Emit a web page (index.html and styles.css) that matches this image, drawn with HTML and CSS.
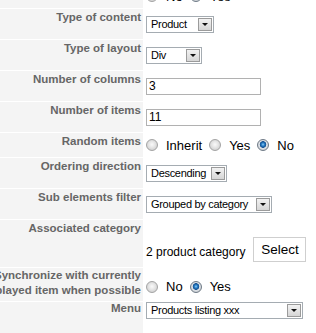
FILE: index.html
```html
<!DOCTYPE html>
<html>
<head>
  <meta charset="utf-8">
  <title>Module parameters</title>
  <link rel="stylesheet" href="styles.css">
</head>
<body>
  <div class="params">
    <div class="row row-short">
      <div class="key">Show title</div>
      <div class="value">
        <label class="choice"><input type="radio" name="showtitle">No</label>
        <label class="choice"><input type="radio" name="showtitle" checked>Yes</label>
      </div>
    </div>
    <div class="row">
      <div class="key">Type of content</div>
      <div class="value">
        <span class="select w-product"><select><option>Product</option><option>Category</option></select></span>
      </div>
    </div>
    <div class="row">
      <div class="key">Type of layout</div>
      <div class="value">
        <span class="select w-div"><select><option>Div</option><option>Table</option></select></span>
      </div>
    </div>
    <div class="row">
      <div class="key">Number of columns</div>
      <div class="value"><input class="text" type="text" value="3"></div>
    </div>
    <div class="row">
      <div class="key">Number of items</div>
      <div class="value"><input class="text" type="text" value="11"></div>
    </div>
    <div class="row row-short">
      <div class="key">Random items</div>
      <div class="value">
        <label class="choice"><input type="radio" name="random">Inherit</label>
        <label class="choice"><input type="radio" name="random">Yes</label>
        <label class="choice"><input type="radio" name="random" checked>No</label>
      </div>
    </div>
    <div class="row">
      <div class="key">Ordering direction</div>
      <div class="value">
        <span class="select w-desc"><select><option>Descending</option><option>Ascending</option></select></span>
      </div>
    </div>
    <div class="row">
      <div class="key">Sub elements filter</div>
      <div class="value">
        <span class="select w-group"><select><option>Grouped by category</option><option>None</option></select></span>
      </div>
    </div>
    <div class="row row-tall">
      <div class="key">Associated category</div>
      <div class="value value-bottom">
        <span class="count">2 product category</span>
        <button class="btn" type="button">Select</button>
      </div>
    </div>
    <div class="row row-sync">
      <div class="key">Synchronize with currently played item when possible</div>
      <div class="value value-low">
        <label class="choice"><input type="radio" name="sync">No</label>
        <label class="choice"><input type="radio" name="sync" checked>Yes</label>
      </div>
    </div>
    <div class="row row-menu">
      <div class="key">Menu</div>
      <div class="value value-top">
        <span class="select w-menu"><select><option>Products listing xxx</option></select></span>
      </div>
    </div>
  </div>
</body>
</html>
```

FILE: styles.css
```css
body {
  margin: 0;
  background: #fff;
  font-family: "Liberation Sans", Arial, sans-serif;
  overflow: hidden;
}
.params {
  margin: -16px 0 0 -22px;
  display: flex;
  flex-direction: column;
  gap: 1px;
}
.row {
  display: flex;
  height: 30px;
}
.row-short {
  height: 24px;
}
.row-tall {
  height: 47px;
}
.row-sync {
  height: 33px;
}
.row-menu {
  height: 40px;
}
.key {
  flex: 0 0 165px;
  box-sizing: border-box;
  padding: 1px 2px 0 4px;
  background: #f4f4f4;
  color: #666;
  font-size: 11.5px;
  font-weight: bold;
  line-height: 15px;
  text-align: right;
}
.row-sync .key {
  padding-top: 0;
}
.row-menu .key {
  padding-top: 0;
  line-height: 13px;
}
.value {
  flex: 1;
  display: flex;
  align-items: center;
  gap: 7px;
  padding-left: 3px;
  font-size: 13px;
  color: #000;
}
.value-bottom {
  align-items: flex-end;
  gap: 8px;
  padding-bottom: 5px;
}
.value-low {
  padding-top: 4px;
}
.value-top {
  align-items: flex-start;
}
.choice {
  display: flex;
  align-items: center;
  gap: 8px;
}
.choice input {
  appearance: none;
  margin: 0;
  width: 12px;
  height: 12px;
  border: 1px solid #a3a3a3;
  border-radius: 50%;
  background: radial-gradient(circle at 50% 45%, #fafafa 0, #e6e6e6 3px, #cfcfcf 6px);
}
.choice input:checked {
  border-color: #6e7a86;
  background: radial-gradient(circle at 50% 45%, #8fd0f5 0, #2a7fc8 1.5px, #114f8f 3px, #dfe3e8 3.6px, #c8ccd0 6px);
}
.select {
  position: relative;
  display: inline-block;
  height: 17px;
}
.select select {
  appearance: none;
  box-sizing: border-box;
  width: 100%;
  height: 17px;
  margin: 0;
  padding: 0 18px 0 4px;
  border: 1px solid #a5acb2;
  border-radius: 0;
  background: #fff;
  color: #000;
  font-family: "Liberation Sans", Arial, sans-serif;
  font-size: 11px;
  letter-spacing: -0.3px;
  line-height: 15px;
}
.select::before {
  content: "";
  position: absolute;
  top: 2px;
  right: 2px;
  width: 12px;
  height: 11px;
  border: 1px solid #9b9b9b;
  background: linear-gradient(#f2f2f2, #d6d6d6);
  pointer-events: none;
}
.select::after {
  content: "";
  position: absolute;
  top: 7px;
  right: 6px;
  border-left: 3px solid transparent;
  border-right: 3px solid transparent;
  border-top: 3px solid #111;
  pointer-events: none;
}
.w-product { width: 68px; }
.w-div { width: 56px; }
.w-desc { width: 81px; }
.w-group { width: 126px; }
.w-menu { width: 157px; }
.text {
  box-sizing: border-box;
  width: 115px;
  height: 17px;
  margin: 0;
  padding: 0 2px;
  border: 1px solid #b1b1b1;
  font-family: "Liberation Sans", Arial, sans-serif;
  font-size: 12px;
  color: #000;
}
.count {
  font-size: 12px;
  line-height: 20px;
}
.btn {
  box-sizing: border-box;
  width: 53px;
  height: 25px;
  margin: 0;
  padding: 0;
  border: 1px solid #cfcfcf;
  background: #fff;
  color: #000;
  font-family: "Liberation Sans", Arial, sans-serif;
  font-size: 13.5px;
}
```
